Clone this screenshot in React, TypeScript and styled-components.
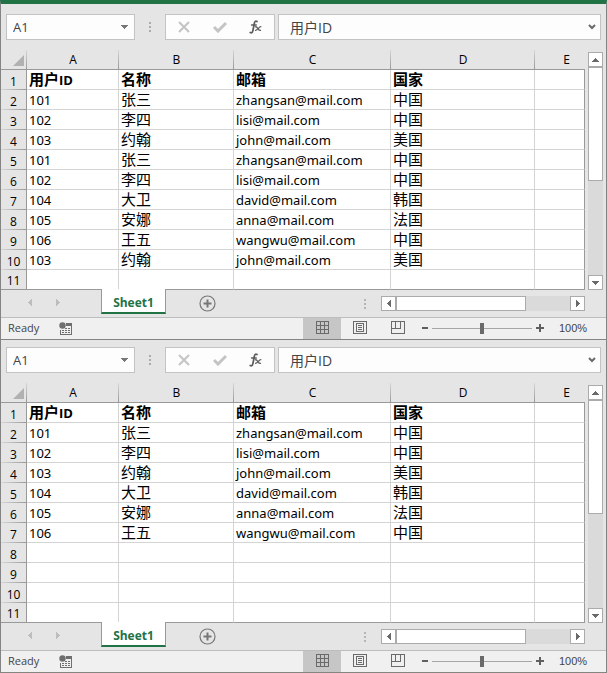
import React from "react";
import styled, { createGlobalStyle } from "styled-components";

const GlobalStyle = createGlobalStyle`
  * { box-sizing: border-box; }
  body { margin: 0; background: #e5e5e5; font: 13px/19px "Open Sans", "Noto Sans CJK SC", sans-serif; color: #000; }
  button, input { font: inherit; color: inherit; margin: 0; padding: 0; border: 0; background: none; border-radius: 0; outline: none; }
  svg { display: block; }
`;

const Page = styled.main`
  min-width: 600px;
`;

const TitleEdge = styled.header`
  height: 7px;
  border-top: 4px solid #217346;
  border-left: 1px solid #848484;
  border-right: 1px solid #848484;
`;

const Window = styled.section`
  display: flex;
  flex-direction: column;
  background: #e5e5e5;
  border: 1px solid #848484;
  border-top: 0;
`;

const FormulaBar = styled.div`
  display: flex;
  padding: 7px 5px 10px;
  color: #444;
`;

const Field = styled.div<{ $width?: number }>`
  display: flex;
  align-items: center;
  height: 26px;
  background: #fdfdfd;
  border: 1px solid #c3c3c3;
  ${(p) => (p.$width ? `width: ${p.$width}px;` : "flex: 1; min-width: 0;")}
`;

const FieldInput = styled.input<{ $indent: number; $size: number }>`
  flex: 1;
  min-width: 0;
  height: 24px;
  padding-left: ${(p) => p.$indent}px;
  font-size: ${(p) => p.$size}px;
`;

const IconButton = styled.button<{ $width: number }>`
  display: flex;
  align-items: center;
  justify-content: center;
  width: ${(p) => p.$width}px;
  height: 24px;
`;

const BarGrip = styled.div`
  display: flex;
  align-items: center;
  justify-content: center;
  width: 30px;
`;

const FormulaGap = styled.div`
  width: 3px;
`;

const SheetArea = styled.div`
  display: flex;
  padding-right: 3px;
`;

const Grid = styled.table`
  flex: 1;
  min-width: 0;
  table-layout: fixed;
  border-collapse: separate;
  border-spacing: 0;
`;

const Column = styled.col<{ $width?: number }>`
  ${(p) => (p.$width ? `width: ${p.$width}px;` : "")}
`;

const HeadCell = styled.th<{ $last?: boolean }>`
  height: 20px;
  padding: 0 0 0 ${(p) => (p.$last ? 13 : 0)}px;
  font-size: 12px;
  line-height: 19px;
  font-weight: 400;
  text-align: center;
  border-bottom: 1px solid #999;
  background: ${(p) =>
    p.$last ? "none" : "linear-gradient(#d6d6d6, #999) right / 1px 100% no-repeat"};
`;

const CornerIcon = styled.svg`
  margin: 1px 3px 0 auto;
`;

const RowNumber = styled.th<{ $last: boolean }>`
  height: 20px;
  padding: 2px 0 0;
  font-size: 12px;
  line-height: 17px;
  font-weight: 400;
  text-align: center;
  border-right: 1px solid #999;
  border-bottom: ${(p) => (p.$last ? "1px solid #999" : "0")};
  background: ${(p) =>
    p.$last ? "none" : "linear-gradient(90deg, #d6d6d6, #999) bottom / 100% 1px no-repeat"};
`;

const Cell = styled.td<{ $bold: boolean; $edge: boolean; $last: boolean }>`
  height: 20px;
  padding: 2px 0 0 2px;
  font-family: ${(p) => (p.$bold ? '"Open Sans"' : '"Noto Sans"')}, "Noto Sans CJK SC", sans-serif;
  line-height: 17px;
  white-space: nowrap;
  background: #fff;
  font-weight: ${(p) => (p.$bold ? 700 : 400)};
  border-right: 1px solid ${(p) => (p.$edge ? "#999" : "#d4d4d4")};
  border-bottom: 1px solid ${(p) => (p.$last ? "#999" : "#d4d4d4")};
`;

const Han = styled.span`
  font-family: "Noto Sans CJK SC", sans-serif;
  font-size: 15px;
  line-height: 0;
`;

const VerticalBar = styled.div`
  display: flex;
  flex-direction: column;
  width: 15px;
  margin: 2px 0 0 3px;
  background: #dadada;
`;

const HorizontalBar = styled.div`
  display: flex;
  width: 204px;
  height: 15px;
  background: #dadada;
`;

const ScrollButton = styled.button`
  display: flex;
  align-items: center;
  justify-content: center;
  flex: none;
  width: 15px;
  height: 15px;
  background: #fff;
  border: 1px solid #ababab;
`;

const ScrollThumb = styled.div<{ $width: number; $height: number }>`
  width: ${(p) => p.$width}px;
  height: ${(p) => p.$height}px;
  background: #fff;
  border: 1px solid #ababab;
`;

const Spacer = styled.div`
  flex: 1;
`;

const TabStrip = styled.div`
  display: flex;
  align-items: flex-start;
  height: 28px;
  padding-right: 21px;
  border-bottom: 1px solid #bdbdbd;
`;

const TabNav = styled.div`
  display: flex;
  width: 100px;
  padding-left: 15px;
`;

const SheetTab = styled.button`
  z-index: 1;
  width: 65px;
  height: 25px;
  margin-top: -1px;
  padding-top: 4px;
  background: #fff;
  border: 1px solid #999;
  border-top: 0;
  border-bottom: 2px solid #217346;
  color: #217346;
  font-size: 12px;
  line-height: 19px;
  font-weight: 700;
`;

const AddWrap = styled.div`
  padding: 1px 0 0 26px;
`;

const TabGrip = styled.div`
  padding: 8px 15px 0 0;
`;

const HorizontalWrap = styled.div`
  padding-top: 6px;
`;

const StatusBar = styled.footer`
  display: flex;
  align-items: center;
  height: 21px;
  padding-right: 19px;
  background: #f0f0f0;
  color: #444;
  font-size: 11px;
`;

const Ready = styled.span`
  width: 49px;
  padding: 0 0 2px 7px;
`;

const ViewButton = styled.button<{ $active?: boolean }>`
  display: flex;
  align-items: center;
  justify-content: center;
  width: 38px;
  height: 21px;
  padding-bottom: 2px;
  background: ${(p) => (p.$active ? "#c6c6c6" : "transparent")};
`;

const Zoom = styled.div`
  display: flex;
  align-items: center;
  padding: 0 0 1px 1px;
`;

const ZoomSlider = styled.input`
  appearance: none;
  width: 100px;
  height: 20px;
  background: linear-gradient(#a6a6a6, #a6a6a6) center / 100% 1px no-repeat;
  &::-webkit-slider-thumb {
    appearance: none;
    width: 4px;
    height: 11px;
    background: #6a6a6a;
    border-radius: 0;
  }
`;

const Percent = styled.output`
  width: 28px;
  margin-left: 12px;
  font-family: "Liberation Sans", sans-serif;
`;

type Row = string[];

const header: Row = ["用户ID", "名称", "邮箱", "国家"];

const sourceRows: Row[] = [
  header,
  ["101", "张三", "zhangsan@mail.com", "中国"],
  ["102", "李四", "lisi@mail.com", "中国"],
  ["103", "约翰", "john@mail.com", "美国"],
  ["101", "张三", "zhangsan@mail.com", "中国"],
  ["102", "李四", "lisi@mail.com", "中国"],
  ["104", "大卫", "david@mail.com", "韩国"],
  ["105", "安娜", "anna@mail.com", "法国"],
  ["106", "王五", "wangwu@mail.com", "中国"],
  ["103", "约翰", "john@mail.com", "美国"],
];

const uniqueRows: Row[] = [
  header,
  ["101", "张三", "zhangsan@mail.com", "中国"],
  ["102", "李四", "lisi@mail.com", "中国"],
  ["103", "约翰", "john@mail.com", "美国"],
  ["104", "大卫", "david@mail.com", "韩国"],
  ["105", "安娜", "anna@mail.com", "法国"],
  ["106", "王五", "wangwu@mail.com", "中国"],
];

const columns = ["A", "B", "C", "D", "E"];
const columnWidths = [92, 115, 157, 144, undefined];
const rowCount = 11;

function MixedText({ text }: { text: string }) {
  const runs = text.match(/[\u4e00-\u9fff]+|[^\u4e00-\u9fff]+/g) ?? [];
  return (
    <>
      {runs.map((run, i) =>
        /[\u4e00-\u9fff]/.test(run) ? <Han key={i}>{run}</Han> : <React.Fragment key={i}>{run}</React.Fragment>
      )}
    </>
  );
}

function Grip({ color = "#ababab" }: { color?: string }) {
  return (
    <svg width="2" height="12" fill={color} shapeRendering="crispEdges" aria-hidden="true">
      <path d="M0 1h2v2H0zM0 5h2v2H0zM0 9h2v2H0z" />
    </svg>
  );
}

const arrowPaths = {
  up: "M3 0h1v1h1v1h1v1h1v1H0V3h1V2h1V1h1z",
  down: "M0 0h7v1H6v1H5v1H4v1H3V3H2V2H1V1H0z",
  left: "M3 0h1v7H3V6H2V5H1V4H0V3h1V2h1V1h1z",
  right: "M0 0h1v1h1v1h1v1h1v1H3v1H2v1H1v1H0z",
};

function Arrow({ dir, color = "#6a6a6a" }: { dir: keyof typeof arrowPaths; color?: string }) {
  const vertical = dir === "up" || dir === "down";
  return (
    <svg
      width={vertical ? 7 : 4}
      height={vertical ? 4 : 7}
      fill={color}
      shapeRendering="crispEdges"
      aria-hidden="true"
    >
      <path d={arrowPaths[dir]} />
    </svg>
  );
}

function Sheet({ rows, name }: { rows: Row[]; name: string }) {
  return (
    <Window aria-label={name}>
      <FormulaBar>
        <Field $width={129}>
          <FieldInput $indent={6} $size={13} aria-label="Name Box" defaultValue="A1" />
          <IconButton $width={19} aria-label="Show names">
            <Arrow dir="down" color="#777" />
          </IconButton>
        </Field>
        <BarGrip>
          <Grip />
        </BarGrip>
        <Field $width={110}>
          <IconButton $width={36} aria-label="Cancel">
            <svg width="12" height="12" viewBox="0 0 12 12" fill="none" stroke="#c4c4c4" strokeWidth="2">
              <path d="M1 1l10 10M11 1L1 11" />
            </svg>
          </IconButton>
          <IconButton $width={36} aria-label="Enter">
            <svg width="14" height="12" viewBox="0 0 14 12" fill="none" stroke="#c4c4c4" strokeWidth="3">
              <path d="M1 6l4 4 8-8" />
            </svg>
          </IconButton>
          <IconButton $width={36} aria-label="Insert Function">
            <svg width="14" height="14" viewBox="0 0 14 14" fill="none" stroke="#5c5c5c" strokeLinecap="round">
              <path d="M8 1.500C6.600.6 5.700 1.500 5.300 3.500L3.900 10.500C3.500 12.500 2.600 13.300 1.200 12.500" strokeWidth="1.700" />
              <path d="M2.500 5h4.800" strokeWidth="1.300" />
              <path d="M6.500 6.800c2-.8 2.400 4.400 5 3.500M11.800 6.700c-1.800 0-3 3.500-5.200 3.700" strokeWidth="1.300" />
            </svg>
          </IconButton>
        </Field>
        <FormulaGap />
        <Field>
          <FieldInput $indent={11} $size={14} aria-label="Formula" defaultValue="用户ID" />
          <IconButton $width={16} aria-label="Expand formula bar">
            <svg width="8" height="6" viewBox="0 0 8 6" fill="none" stroke="#6a6a6a" strokeWidth="2">
              <path d="M1 1l3 3 3-3" />
            </svg>
          </IconButton>
        </Field>
      </FormulaBar>

      <SheetArea>
        <Grid>
          <colgroup>
            <Column $width={26} />
            {columnWidths.map((w, i) => (
              <Column key={i} $width={w} />
            ))}
          </colgroup>
          <thead>
            <tr>
              <HeadCell aria-label="Select all">
                <CornerIcon width="11" height="11" fill="#b1b1b1" aria-hidden="true">
                  <path d="M11 0v11H0z" />
                </CornerIcon>
              </HeadCell>
              {columns.map((c) => (
                <HeadCell key={c} scope="col" $last={c === "E"}>
                  {c}
                </HeadCell>
              ))}
            </tr>
          </thead>
          <tbody>
            {Array.from({ length: rowCount }, (_, r) => (
              <tr key={r}>
                <RowNumber scope="row" $last={r === rowCount - 1}>
                  {r + 1}
                </RowNumber>
                {columns.map((c, i) => (
                  <Cell key={c} $bold={r === 0} $edge={c === "E"} $last={r === rowCount - 1}>
                    <MixedText text={rows[r]?.[i] ?? ""} />
                  </Cell>
                ))}
              </tr>
            ))}
          </tbody>
        </Grid>
        <VerticalBar>
          <ScrollButton aria-label="Scroll up">
            <Arrow dir="up" />
          </ScrollButton>
          <ScrollThumb $width={15} $height={114} />
          <Spacer />
          <ScrollButton aria-label="Scroll down">
            <Arrow dir="down" />
          </ScrollButton>
        </VerticalBar>
      </SheetArea>

      <TabStrip>
        <TabNav>
          <IconButton $width={28} aria-label="Previous sheet">
            <Arrow dir="left" color="#bdbdbd" />
          </IconButton>
          <IconButton $width={28} aria-label="Next sheet">
            <Arrow dir="right" color="#bdbdbd" />
          </IconButton>
        </TabNav>
        <SheetTab>Sheet1</SheetTab>
        <AddWrap>
          <IconButton $width={30} aria-label="New sheet">
            <svg width="17" height="17" viewBox="0 0 17 17" fill="none" stroke="#777">
              <circle cx="8.500" cy="8.500" r="7.500" strokeWidth="1.200" />
              <path d="M8.500 4.500v8M4.500 8.500h8" strokeWidth="2" />
            </svg>
          </IconButton>
        </AddWrap>
        <Spacer />
        <TabGrip>
          <Grip color="#b5b5b5" />
        </TabGrip>
        <HorizontalWrap>
          <HorizontalBar>
            <ScrollButton aria-label="Scroll left">
              <Arrow dir="left" />
            </ScrollButton>
            <ScrollThumb $width={130} $height={15} />
            <Spacer />
            <ScrollButton aria-label="Scroll right">
              <Arrow dir="right" />
            </ScrollButton>
          </HorizontalBar>
        </HorizontalWrap>
      </TabStrip>

      <StatusBar>
        <Ready>Ready</Ready>
        <IconButton $width={32} aria-label="Record macro">
          <svg width="14" height="14" viewBox="0 0 14 14" fill="#6f6f6f" aria-hidden="true">
            <circle cx="3.500" cy="3.500" r="3.200" />
            <path d="M7 1h6v3H7zM12 4h1v9H1V8h1v4h10z" />
            <path d="M6 6h2v1H6zM9 6h2v1H9zM3 8h2v1H3zM6 8h2v1H6zM9 8h2v1H9zM3 10h2v1H3zM6 10h2v1H6zM9 10h2v1H9z" />
          </svg>
        </IconButton>
        <Spacer />
        <ViewButton $active aria-label="Normal view">
          <svg width="13" height="13" fill="none" stroke="#6a6a6a" shapeRendering="crispEdges">
            <path d="M.5.5h12v12H.5zM4.500 0v13M8.500 0v13M0 4.500h13M0 8.500h13" />
          </svg>
        </ViewButton>
        <ViewButton aria-label="Page layout view">
          <svg width="14" height="13" fill="none" stroke="#6a6a6a" shapeRendering="crispEdges">
            <path d="M.5.5h13v12H.5zM3.500 2.500h7v8h-7zM5 4.500h4M5 6.500h4M5 8.500h4" />
          </svg>
        </ViewButton>
        <ViewButton aria-label="Page break preview">
          <svg width="14" height="13" fill="none" stroke="#6a6a6a" shapeRendering="crispEdges">
            <path d="M.5.5h13v12H.5zM4.500 0v7M9.500 0v7.500M0 7.500h10" />
          </svg>
        </ViewButton>
        <Zoom>
          <IconButton $width={14} aria-label="Zoom out">
            <svg width="6" height="2" fill="#5f5f5f">
              <path d="M0 0h6v2H0z" />
            </svg>
          </IconButton>
          <ZoomSlider type="range" min="0" max="200" defaultValue="100" aria-label="Zoom" />
          <IconButton $width={15} aria-label="Zoom in">
            <svg width="8" height="8" fill="#5f5f5f">
              <path d="M3 0h2v3h3v2H5v3H3V5H0V3h3z" />
            </svg>
          </IconButton>
          <Percent>100%</Percent>
        </Zoom>
      </StatusBar>
    </Window>
  );
}

export default function App() {
  return (
    <Page>
      <GlobalStyle />
      <TitleEdge />
      <Sheet rows={sourceRows} name="Customer rows" />
      <Sheet rows={uniqueRows} name="Customer rows without duplicates" />
    </Page>
  );
}
